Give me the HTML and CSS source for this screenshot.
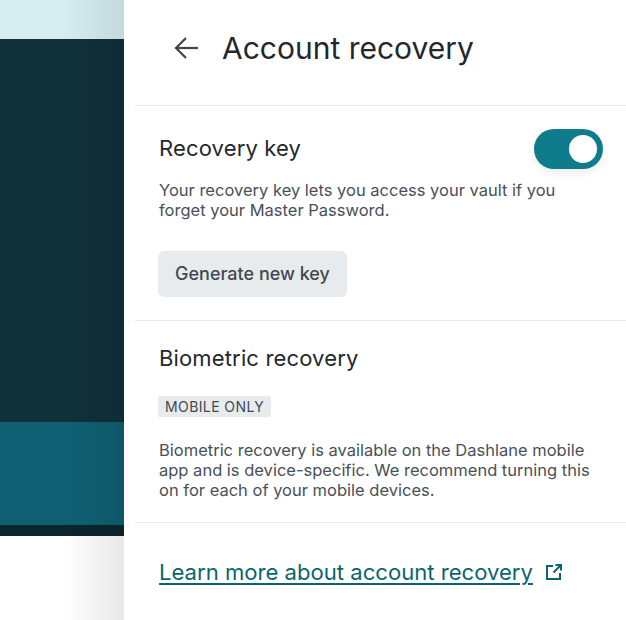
FILE: index.html
```html
<!DOCTYPE html>
<html lang="en">
<head>
<meta charset="utf-8">
<title>Account recovery</title>
<link rel="stylesheet" href="styles.css">
</head>
<body>
<div class="app">
  <div class="backdrop" aria-hidden="true">
    <div class="band band-light"></div>
    <div class="band band-dark"></div>
    <div class="band band-teal"></div>
    <div class="band band-deep"></div>
    <div class="band band-white"></div>
    <div class="shadow"></div>
  </div>
  <main class="panel">
    <header class="head">
      <button class="back" aria-label="Back">
        <svg width="26" height="24" viewBox="0 0 26 24" fill="none" stroke="#3f454d" stroke-width="2.200"><path d="M25 12H3"/><path d="M13 2 3 12l10 10"/></svg>
      </button>
      <h1 class="title">Account recovery</h1>
    </header>
    <section class="section section-key">
      <div class="row">
        <h2 class="label">Recovery key</h2>
        <div class="toggle"><span class="knob"></span></div>
      </div>
      <p class="text">Your recovery key lets you access your vault if you forget your Master Password.</p>
      <button class="btn">Generate new key</button>
    </section>
    <section class="section section-bio">
      <h2 class="label">Biometric recovery</h2>
      <span class="badge">MOBILE ONLY</span>
      <p class="text">Biometric recovery is available on the Dashlane mobile app and is device-specific. We recommend turning this on for each of your mobile devices.</p>
    </section>
    <section class="section section-link">
      <a class="link" href="#">Learn more about account recovery</a>
      <svg class="ext" width="16" height="16" viewBox="0 0 16 16" fill="none" stroke="#0a6570" stroke-width="2"><path d="M7 2H1V15H14V9"/><path d="M9.500 1H15V6.500" /><path d="M15 1 7.500 8.500"/></svg>
    </section>
  </main>
</div>
</body>
</html>
```
FILE: styles.css
```css
* { box-sizing: border-box; }
html, body { margin: 0; height: 100%; background: #fff; overflow: hidden; }
body { font-family: Inter, "Liberation Sans", sans-serif; color: #23282d; }
.app { display: flex; width: 626px; height: 620px; }
.backdrop { width: 124px; flex: none; display: flex; flex-direction: column; position: relative; }
.band { flex: none; }
.band-light { height: 39px; background: #d6eef0; }
.band-dark { height: 383px; background: #10313a; }
.band-teal { height: 103px; background: #0f6072; }
.band-deep { height: 11px; background: #0b252c; }
.band-white { flex: 1; background: #fff; }
.shadow { position: absolute; inset: 0; background: linear-gradient(90deg, rgba(0,0,0,0) 50%, rgba(0,0,0,.04) 72%, rgba(0,0,0,.09) 100%); }
.panel { flex: 1; display: flex; flex-direction: column; padding-left: 11px; background: #fff; }
.head { height: 106px; display: flex; align-items: center; padding: 0 0 9px 38px; border-bottom: 1px solid #e8eaec; }
.back { border: 0; background: none; padding: 0; width: 26px; height: 24px; margin-right: 23px; display: block; }
.back svg { display: block; }
.title { margin: 0; font-size: 30px; font-weight: 400; line-height: 36px; }
.section { padding-left: 23px; padding-right: 23px; border-bottom: 1px solid #e8eaec; }
.section-key { height: 215px; padding-top: 23px; }
.row { display: flex; justify-content: space-between; align-items: center; height: 40px; margin-bottom: 11px; }
.row .label { margin-bottom: 2px; }
.label { margin: 0; font-size: 22px; font-weight: 400; line-height: 28px; letter-spacing: .15px; padding-left: 1px; }
.toggle { width: 69px; height: 40px; border-radius: 20px; background: #0e7c8b; position: relative; box-shadow: 0 4px 10px rgba(0,0,0,.08); }
.knob { position: absolute; right: 6px; top: 6px; width: 28px; height: 28px; border-radius: 50%; background: #fff; }
.text { margin: 0; padding-left: 1px; font-size: 16.500px; line-height: 20px; color: #4a5058; }
.btn { display: block; margin-top: 31px; width: 189px; height: 46px; border: 0; border-radius: 6px; background: #e8ebee; color: #43484f; font: 500 18px Inter, "Liberation Sans", sans-serif; padding: 0 0 2px; }
.section-bio { height: 202px; padding-top: 23px; }
.section-bio .label { margin-bottom: 24px; }
.badge { display: block; width: fit-content; height: 21px; line-height: 21px; padding: 0 7px; border-radius: 2px; background: #e8ebee; color: #43484f; font-size: 14px; letter-spacing: .4px; font-weight: 400; margin-bottom: 23px; }
.section-link { border-bottom: 0; padding-top: 32px; display: flex; align-items: center; height: 96px; padding-bottom: 30px; }
.link { font-size: 22.100px; line-height: 30px; color: #0a6570; margin-left: 1px; text-underline-offset: 3px; text-decoration-thickness: 2px; }
.ext { margin-left: 13px; flex: none; }
```
